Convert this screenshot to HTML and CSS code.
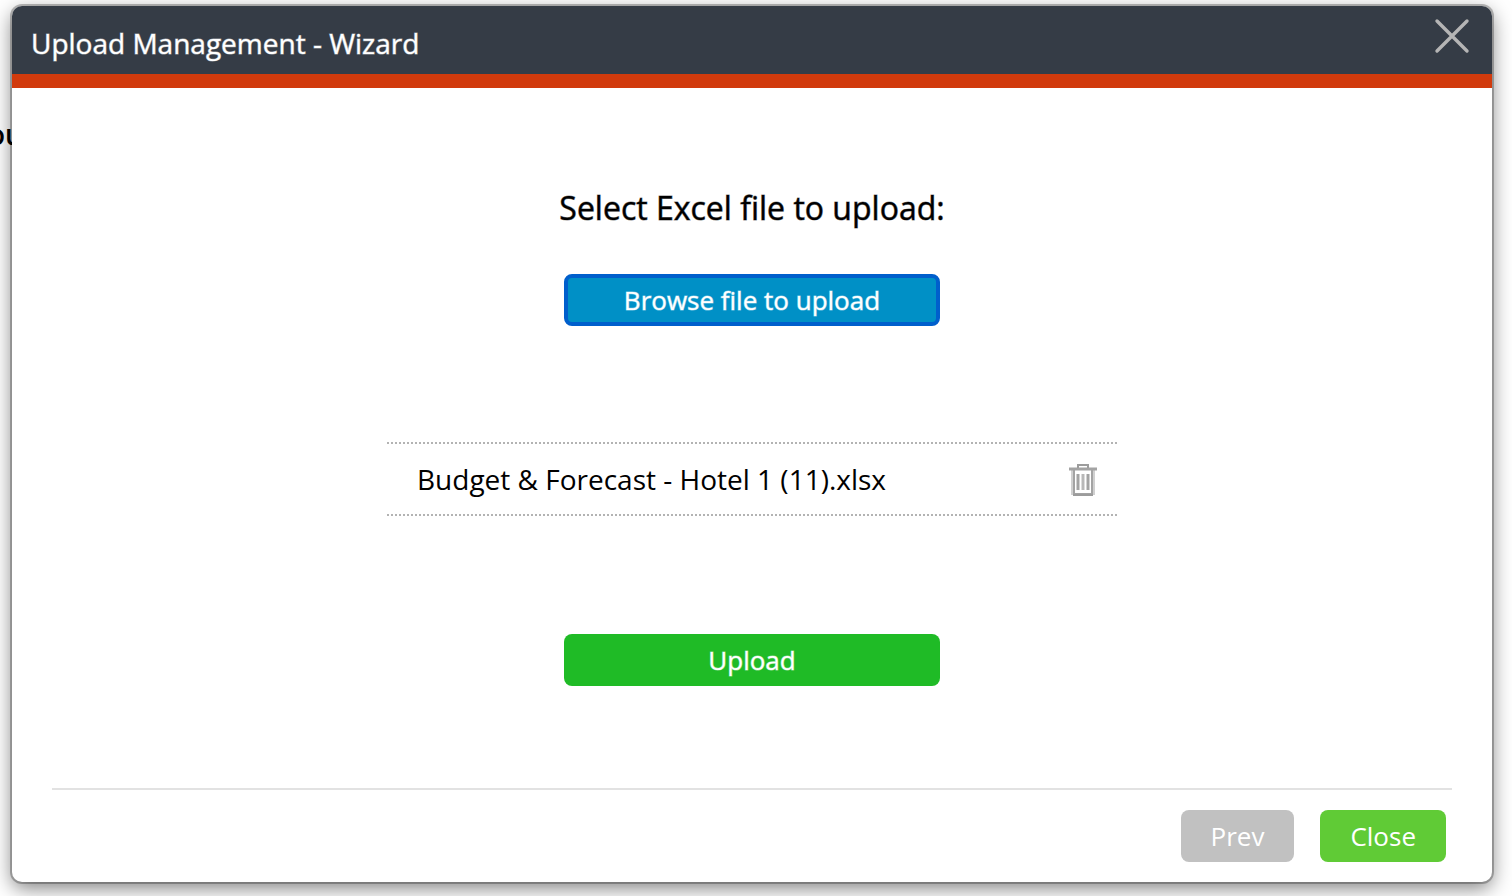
FILE: index.html
```
<!DOCTYPE html>
<html lang="en">
  <head>
    <meta charset="utf-8">
    <title>Upload Management - Wizard</title>
    <link rel="stylesheet" href="styles.css">
  </head>
  <body>
    <p class="page-text">ou</p>
    <div class="modal" role="dialog" aria-labelledby="wizard-title">
      <header class="modal-header">
        <h1 class="modal-title" id="wizard-title">Upload Management - Wizard</h1>
        <button class="icon-btn" type="button" aria-label="Close wizard">
          <svg width="36" height="36" viewBox="0 0 36 36" fill="none" stroke="#b5b5b5" stroke-width="3.4" stroke-linecap="round">
            <path d="M3 3L33 33M33 3L3 33"/>
          </svg>
        </button>
      </header>
      <main class="modal-body">
        <h2 class="heading">Select Excel file to upload:</h2>
        <button class="btn btn-browse" type="button">Browse file to upload</button>
        <div class="file-row">
          <span>Budget &amp; Forecast - Hotel 1 (11).xlsx</span>
          <button class="icon-btn" type="button" aria-label="Remove file">
            <svg width="28" height="34" viewBox="0 0 28 34" fill="none">
              <path d="M3 7V32H25V7" stroke="#d0d0d0" stroke-width="2"/>
              <path d="M5 8V32H23V8" stroke="#a3a3a3" stroke-width="2"/>
              <path d="M4 33H24" stroke="#9c9c9c" stroke-width="2"/>
              <path d="M0 7H28" stroke="#a3a3a3" stroke-width="3"/>
              <path d="M9 6V3H19V6" stroke="#9c9c9c" stroke-width="2"/>
              <path d="M9 12V28M19 12V28" stroke="#a3a3a3" stroke-width="3"/>
              <path d="M14 12V28" stroke="#b8b8b8" stroke-width="3"/>
            </svg>
          </button>
        </div>
        <button class="btn btn-upload" type="button">Upload</button>
      </main>
      <footer class="modal-footer">
        <button class="btn btn-prev" type="button" disabled>Prev</button>
        <button class="btn btn-close" type="button">Close</button>
      </footer>
    </div>
  </body>
</html>
```
FILE: styles.css
```
* {
  box-sizing: border-box;
}

body {
  margin: 0;
  padding: 6px 20px 14px 12px;
  min-height: 100vh;
  display: flex;
  overflow: hidden;
  background: #fff;
  color: #000;
  font-family: "Open Sans", "Noto Sans", sans-serif;
  font-size: 28px;
}

/* page content left behind the dialog */
.page-text {
  position: absolute;
  left: -12px;
  top: 116px;
  margin: 0;
  font-size: 28px;
  font-weight: 600;
  line-height: 36px;
}

.modal {
  position: relative;
  flex: 1;
  display: flex;
  flex-direction: column;
  border-radius: 10px;
  background: #fff;
  box-shadow: 0 0 0 2px rgba(0, 0, 0, 0.25), 0 6px 20px rgba(0, 0, 0, 0.5);
}

.modal-header {
  display: flex;
  justify-content: space-between;
  align-items: flex-start;
  height: 82px;
  padding: 12px 22px 0 19px;
  border-bottom: 14px solid #d13a0c;
  border-radius: 10px 10px 0 0;
  background: #353c46;
  color: #fff;
}

.modal-title,
.heading {
  margin: 0;
  font-weight: 400;
}

.modal-title {
  font-size: 28px;
  line-height: 50px;
  -webkit-text-stroke: 1px rgba(255, 255, 255, 0.5);
}

.icon-btn {
  display: flex;
  padding: 0;
  border: 0;
  background: none;
  cursor: pointer;
}

.modal-body {
  flex: 1;
  display: flex;
  flex-direction: column;
  align-items: center;
  padding-top: 98px;
}

.heading {
  font-size: 32px;
  line-height: 44px;
  -webkit-text-stroke: 1px rgba(0, 0, 0, 0.5);
}

.btn {
  height: 52px;
  padding: 0 30px;
  border: 0;
  border-radius: 8px;
  color: #fff;
  font-family: inherit;
  font-size: 26px;
  line-height: 36px;
  cursor: pointer;
}

.btn-browse,
.btn-upload {
  width: 376px;
  -webkit-text-stroke: 1px rgba(255, 255, 255, 0.5);
}

.btn-browse {
  margin-top: 44px;
  border: 4px solid #005fcc;
  background: #0090c6;
}

.btn-upload {
  background: #1fbb26;
}

.file-row {
  display: flex;
  justify-content: space-between;
  align-items: center;
  width: 100%;
  max-width: 730px;
  height: 74px;
  margin: 116px 0 118px;
  padding: 0 20px 0 30px;
  border-top: 2px dotted #b3b3b3;
  border-bottom: 2px dotted #b3b3b3;
}

.modal-footer {
  display: flex;
  justify-content: flex-end;
  gap: 26px;
  margin: 0 40px;
  padding: 20px 6px 20px 0;
  border-top: 2px solid #e2e2e2;
}

.btn-prev {
  background: #c1c1c1;
  cursor: default;
}

.btn-close {
  background: #60cb36;
}
```
